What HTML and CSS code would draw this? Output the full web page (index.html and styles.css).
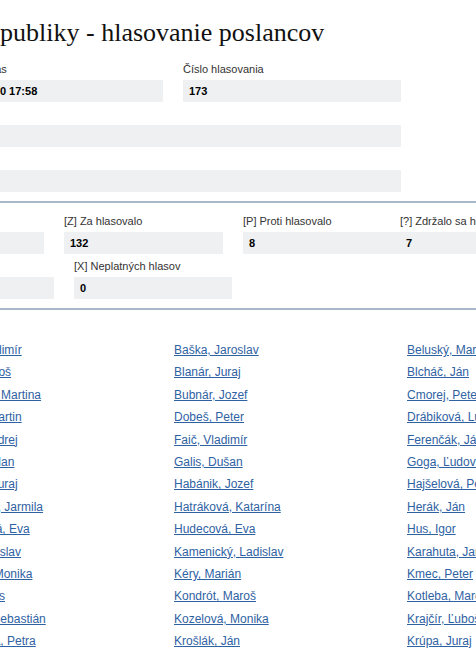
FILE: index.html
```html
<!DOCTYPE html>
<html lang="sk">
	<head>
		<title>Hlasovanie poslancov</title>
		<meta charset="UTF-8" />
		<link rel="stylesheet" href="styles.css">
	</head>
	<body>
		<div class="page">
			<h1 class="title">Národná rada Slovenskej republiky - hlasovanie poslancov</h1>

			<!-- Vote Informations -->
			<div class="vote-info">
				<div class="field">
					<label>Dátum a čas</label>
					<div class="value">13.10.2020 17:58</div>
				</div>
				<div class="field">
					<label>Číslo hlasovania</label>
					<div class="value">173</div>
				</div>
				<div class="field wide">
					<label>Schôdza</label>
					<div class="value"></div>
				</div>
				<div class="field wide">
					<label>Názov</label>
					<div class="value"></div>
				</div>
			</div>

			<!-- Vote Results -->
			<div class="vote-counts">
				<div class="counts-row first">
					<div class="field">
						<label>Prítomní</label>
						<div class="value">147</div>
					</div>
					<div class="field">
						<label>[Z] Za hlasovalo</label>
						<div class="value">132</div>
					</div>
					<div class="field joined">
						<label>[P] Proti hlasovalo</label>
						<div class="value">8</div>
					</div>
					<div class="field">
						<label>[?] Zdržalo sa hlasovania</label>
						<div class="value">7</div>
					</div>
					<div class="field">
						<label>[N] Nehlasovalo</label>
						<div class="value">0</div>
					</div>
				</div>
				<div class="counts-row second">
					<div class="field">
						<label>[0] Neprítomní</label>
						<div class="value">3</div>
					</div>
					<div class="field">
						<label>[X] Neplatných hlasov</label>
						<div class="value">0</div>
					</div>
				</div>
			</div>

			<!-- Deputies -->
			<div class="deputies">
				<a href="#">Andrejuvová, Lucia</a>
				<a href="#">Baláž, Vladimír</a>
				<a href="#">Baška, Jaroslav</a>
				<a href="#">Beluský, Martin</a>
				<a href="#">Bittó Cigániková, Jana</a>

				<a href="#">Bihariová, Irena</a>
				<a href="#">Blaha, Ľuboš</a>
				<a href="#">Blanár, Juraj</a>
				<a href="#">Blcháč, Ján</a>
				<a href="#">Borguľa, Branislav</a>

				<a href="#">Bombic, Martin</a>
				<a href="#">Brisudová, Martina</a>
				<a href="#">Bubnár, Jozef</a>
				<a href="#">Cmorej, Peter</a>
				<a href="#">Čaučík, Ján</a>

				<a href="#">Čekovský, Ján</a>
				<a href="#">Čepček, Martin</a>
				<a href="#">Dobeš, Peter</a>
				<a href="#">Drábiková, Lucia</a>
				<a href="#">Ďuriš Nicholsonová, Lucia</a>

				<a href="#">Danko, Andrej</a>
				<a href="#">Dostál, Ondrej</a>
				<a href="#">Faič, Vladimír</a>
				<a href="#">Ferenčák, Ján</a>
				<a href="#">Fico, Robert</a>

				<a href="#">Fecková, Jana</a>
				<a href="#">Gajdoš, Milan</a>
				<a href="#">Galis, Dušan</a>
				<a href="#">Goga, Ľudovít</a>
				<a href="#">Grausová, Lucia</a>

				<a href="#">Gröhling, Branislav</a>
				<a href="#">Holubec, Juraj</a>
				<a href="#">Habánik, Jozef</a>
				<a href="#">Hajšelová, Petra</a>
				<a href="#">Hlina, Alojz</a>

				<a href="#">Heger, Eduard</a>
				<a href="#">Halgašová, Jarmila</a>
				<a href="#">Hatráková, Katarína</a>
				<a href="#">Herák, Ján</a>
				<a href="#">Hrnčiar, Jaroslav</a>

				<a href="#">Hrnčiar, Stanislav</a>
				<a href="#">Horváthová, Eva</a>
				<a href="#">Hudecová, Eva</a>
				<a href="#">Hus, Igor</a>
				<a href="#">Jurzyca, Eugen</a>

				<a href="#">Kaliňák, Robert</a>
				<a href="#">Huba, Miroslav</a>
				<a href="#">Kamenický, Ladislav</a>
				<a href="#">Karahuta, Jaroslav</a>
				<a href="#">Kazda, Radovan</a>

				<a href="#">Kiššová, Anna</a>
				<a href="#">Kavecká, Monika</a>
				<a href="#">Kéry, Marián</a>
				<a href="#">Kmec, Peter</a>
				<a href="#">Kolesík, Peter</a>

				<a href="#">Kočiš, Marián</a>
				<a href="#">Kollár, Boris</a>
				<a href="#">Kondrót, Maroš</a>
				<a href="#">Kotleba, Marek</a>
				<a href="#">Kovarčík, Michal</a>

				<a href="#">Kozák, Peter</a>
				<a href="#">Kropuch, Sebastián</a>
				<a href="#">Kozelová, Monika</a>
				<a href="#">Krajčír, Ľuboš</a>
				<a href="#">Kremský, Peter</a>

				<a href="#">Kuffa, Štefan</a>
				<a href="#">Krištúfková, Petra</a>
				<a href="#">Krošlák, Ján</a>
				<a href="#">Krúpa, Juraj</a>
				<a href="#">Kurillová, Andrea</a>
			</div>
		</div>
	</body>
</html>
```
FILE: styles.css
```css
html, body {
	overflow: hidden;
}

body {
	margin: 0;
	font-family: "Liberation Sans", Arial, sans-serif;
	color: #333;
}

.page {
	width: 1165px;
	margin-left: -292px;
}

.title {
	margin: 18px 0 0 4px;
	font-family: "Liberation Serif", "Times New Roman", serif;
	font-size: 26px;
	font-weight: normal;
	line-height: 30px;
	color: #111;
	white-space: nowrap;
}

.vote-info {
	display: grid;
	grid-template-columns: 218px 218px;
	column-gap: 20px;
	row-gap: 5px;
	padding: 14px 0 9px 237px;
	border-bottom: 2px solid #a9b8c8;
}

.wide {
	grid-column: span 2;
}

.field label {
	display: block;
	margin-bottom: 4px;
	font-size: 11px;
	line-height: 14px;
	color: #333;
	white-space: nowrap;
}

.value {
	height: 22px;
	padding: 0 6px;
	background-color: #eff0f2;
	font-size: 11px;
	font-weight: bold;
	line-height: 22px;
	color: #000;
}

.vote-counts {
	display: flex;
	flex-direction: column;
	gap: 5px;
	padding: 11px 0 9px;
	border-bottom: 2px solid #a9b8c8;
}

.counts-row {
	display: flex;
	gap: 20px;
}
.counts-row .field {
	width: 159px;
	flex-shrink: 0;
}
.counts-row.first {
	margin-left: 177px;
}
.counts-row.second {
	margin-left: 188px;
}
.counts-row.second .field {
	width: 158px;
}
.counts-row .joined {
	width: 157px;
	margin-right: -20px;
}

.deputies {
	display: grid;
	grid-template-columns: repeat(5, 233px);
	padding-top: 29px;
	font-size: 12px;
	line-height: 22.4px;
}
.deputies a {
	color: #2f62a3;
	white-space: nowrap;
}
```
